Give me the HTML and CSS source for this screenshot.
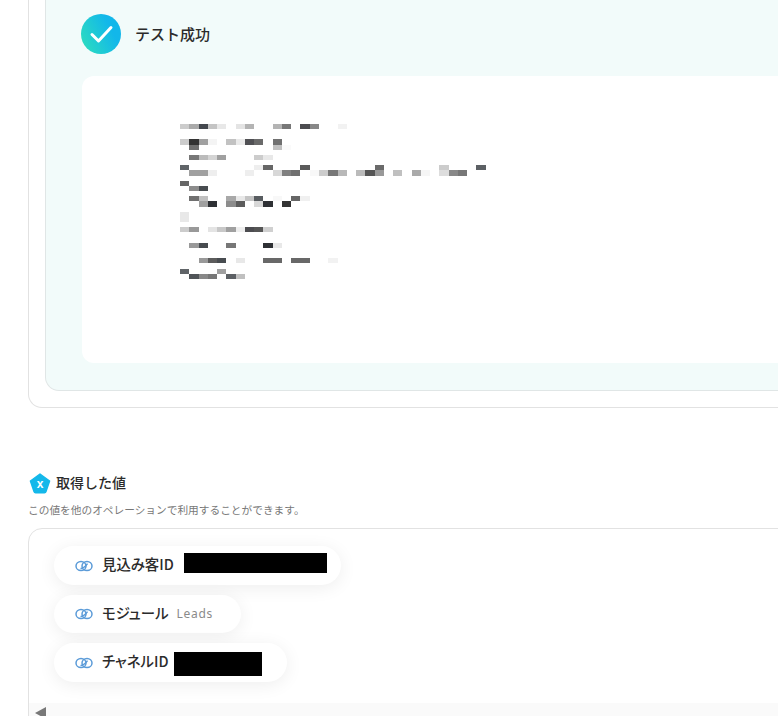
FILE: index.html
```html
<!DOCTYPE html>
<html lang="ja">
<head>
    <meta charset="UTF-8">
    <meta name="viewport" content="width=device-width, initial-scale=1.0">
    <link rel="stylesheet" href="styles.css">
    <title>テスト成功</title>
</head>
<body>
    <div class="page">
        <div class="card">
            <div class="result-panel">
                <div class="result-head">
                    <svg class="check-icon" width="40" height="40" viewBox="0 0 40 40">
                        <defs>
                            <linearGradient id="checkGrad" x1="0" y1="0.75" x2="1" y2="0.25">
                                <stop offset="0" stop-color="#2cdcc0"/>
                                <stop offset="0.75" stop-color="#12b7ea"/>
                            </linearGradient>
                        </defs>
                        <circle cx="20" cy="20" r="20" fill="url(#checkGrad)"/>
                        <path d="M11 20.5 L17.5 27 L30 13.5" fill="none" stroke="#fff" stroke-width="3" stroke-linecap="round" stroke-linejoin="round"/>
                    </svg>
                    <span class="result-title">テスト成功</span>
                </div>
                <div class="result-body">
                    <!-- blurred response, drawn as a mosaic -->
                    <svg class="mosaic" width="315" height="160" viewBox="0 0 34 31" preserveAspectRatio="none" shape-rendering="crispEdges">
                        <g>
                            <rect x="0" y="0" width="1" height="1" fill="#ccc"/><rect x="1" y="0" width="1" height="1" fill="#aaa"/><rect x="2" y="0" width="1" height="1" fill="#44484e"/><rect x="3" y="0" width="1" height="1" fill="#c4c4c4"/><rect x="4" y="0" width="1" height="1" fill="#e8e8e8"/><rect x="6" y="0" width="1" height="1" fill="#e4e4e4"/><rect x="7" y="0" width="1" height="1" fill="#b4b4b4"/><rect x="10" y="0" width="1" height="1" fill="#b4b4b4"/><rect x="11" y="0" width="1" height="1" fill="#777"/><rect x="13" y="0" width="1" height="1" fill="#4c4c50"/><rect x="14" y="0" width="1" height="1" fill="#888"/><rect x="17" y="0" width="1" height="1" fill="#f2f2f2"/>
                            <rect x="0" y="3" width="1" height="1" fill="#ccc"/><rect x="1" y="3" width="1" height="1" fill="#333"/><rect x="2" y="3" width="1" height="1" fill="#a0a0a0"/><rect x="3" y="3" width="1" height="1" fill="#f4f4f4"/><rect x="5" y="3" width="1" height="1" fill="#c2c2c2"/><rect x="6" y="3" width="1" height="1" fill="#eaeaea"/><rect x="7" y="3" width="1" height="1" fill="#505054"/><rect x="8" y="3" width="1" height="1" fill="#6a6a6a"/><rect x="10" y="3" width="1" height="1" fill="#707070"/>
                            <rect x="1" y="4" width="1" height="1" fill="#707070"/><rect x="10" y="4" width="1" height="1" fill="#c0c0c0"/><rect x="11" y="4" width="1" height="1" fill="#fafafa"/>
                            <rect x="1" y="6" width="1" height="1" fill="#777"/><rect x="2" y="6" width="1" height="1" fill="#bbb"/><rect x="3" y="6" width="1" height="1" fill="#d4d4d4"/><rect x="4" y="6" width="1" height="1" fill="#a0a0a0"/><rect x="8" y="6" width="1" height="1" fill="#ccc"/><rect x="9" y="6" width="1" height="1" fill="#e8e8e8"/>
                            <rect x="0" y="8" width="1" height="1" fill="#606468"/><rect x="8" y="8" width="1" height="1" fill="#eee"/><rect x="9" y="8" width="1" height="1" fill="#666"/><rect x="13" y="8" width="1" height="1" fill="#5a5a5a"/><rect x="21" y="8" width="1" height="1" fill="#6a6a6a"/><rect x="28" y="8" width="1" height="1" fill="#ccc"/><rect x="32" y="8" width="1" height="1" fill="#5c6064"/>
                            <rect x="1" y="9" width="2" height="1" fill="#a0a0a0"/><rect x="3" y="9" width="1" height="1" fill="#eee"/><rect x="7" y="9" width="1" height="1" fill="#eee"/><rect x="10" y="9" width="1" height="1" fill="#d8d8d8"/><rect x="11" y="9" width="1" height="1" fill="#808080"/><rect x="12" y="9" width="1" height="1" fill="#707070"/><rect x="14" y="9" width="1" height="1" fill="#f8f8f8"/><rect x="15" y="9" width="1" height="1" fill="#ccc"/><rect x="16" y="9" width="1" height="1" fill="#777"/><rect x="17" y="9" width="1" height="1" fill="#b8b8b8"/><rect x="19" y="9" width="1" height="1" fill="#bbb"/><rect x="20" y="9" width="1" height="1" fill="#555"/><rect x="21" y="9" width="1" height="1" fill="#999"/><rect x="23" y="9" width="1" height="1" fill="#c0c0c0"/><rect x="25" y="9" width="1" height="1" fill="#aaa"/><rect x="26" y="9" width="1" height="1" fill="#f6f6f6"/><rect x="28" y="9" width="1" height="1" fill="#ddd"/><rect x="29" y="9" width="1" height="1" fill="#888"/><rect x="30" y="9" width="1" height="1" fill="#777"/>
                            <rect x="0" y="11" width="1" height="1" fill="#666"/>
                            <rect x="1" y="12" width="1" height="1" fill="#8c8c8c"/><rect x="2" y="12" width="1" height="1" fill="#484c50"/>
                            <rect x="1" y="14" width="1" height="1" fill="#707070"/><rect x="2" y="14" width="1" height="1" fill="#c0c0c0"/><rect x="5" y="14" width="1" height="1" fill="#a8a8a8"/><rect x="6" y="14" width="1" height="1" fill="#e8e8e8"/><rect x="7" y="14" width="1" height="1" fill="#c4c4c4"/><rect x="8" y="14" width="1" height="1" fill="#585c60"/><rect x="10" y="14" width="1" height="1" fill="#f8f8f8"/><rect x="12" y="14" width="1" height="1" fill="#666"/><rect x="13" y="14" width="1" height="1" fill="#f0f0f0"/>
                            <rect x="2" y="15" width="1" height="1" fill="#a0a0a0"/><rect x="3" y="15" width="1" height="1" fill="#2e3034"/><rect x="5" y="15" width="1" height="1" fill="#8c8c8c"/><rect x="6" y="15" width="1" height="1" fill="#5c5c5c"/><rect x="8" y="15" width="1" height="1" fill="#d8d8d8"/><rect x="9" y="15" width="1" height="1" fill="#2e3034"/><rect x="11" y="15" width="1" height="1" fill="#333"/>
                            <rect x="0" y="17" width="1" height="2" fill="#e8e8e8"/>
                            <rect x="0" y="20" width="1" height="1" fill="#ccc"/><rect x="1" y="20" width="1" height="1" fill="#999"/><rect x="3" y="20" width="1" height="1" fill="#e4e4e4"/><rect x="4" y="20" width="1" height="1" fill="#c8c8c8"/><rect x="5" y="20" width="1" height="1" fill="#a0a0a0"/><rect x="6" y="20" width="1" height="1" fill="#eee"/><rect x="7" y="20" width="1" height="1" fill="#4c4c50"/><rect x="8" y="20" width="1" height="1" fill="#555"/><rect x="9" y="20" width="1" height="1" fill="#d0d0d0"/>
                            <rect x="1" y="23" width="1" height="1" fill="#999"/><rect x="2" y="23" width="1" height="1" fill="#484c50"/><rect x="5" y="23" width="1" height="1" fill="#777"/><rect x="9" y="23" width="1" height="1" fill="#2e3034"/><rect x="10" y="23" width="1" height="1" fill="#e8e8e8"/>
                            <rect x="2" y="26" width="1" height="1" fill="#999"/><rect x="3" y="26" width="1" height="1" fill="#5c5c5c"/><rect x="4" y="26" width="1" height="1" fill="#484c50"/><rect x="6" y="26" width="1" height="1" fill="#e8e8e8"/><rect x="9" y="26" width="2" height="1" fill="#686868"/><rect x="12" y="26" width="2" height="1" fill="#686868"/><rect x="16" y="26" width="1" height="1" fill="#f2f2f2"/>
                            <rect x="0" y="28" width="1" height="1" fill="#606468"/><rect x="4" y="28" width="1" height="1" fill="#a0a0a0"/>
                            <rect x="1" y="29" width="1" height="1" fill="#505458"/><rect x="2" y="29" width="1" height="1" fill="#888"/><rect x="3" y="29" width="1" height="1" fill="#777"/><rect x="5" y="29" width="1" height="1" fill="#5c6064"/><rect x="6" y="29" width="1" height="1" fill="#c0c0c0"/>
                        </g>
                    </svg>
                </div>
            </div>
        </div>

        <div class="values-head">
            <svg class="pentagon" width="22" height="21" viewBox="0 0 22 21">
                <path d="M11 1 L20.6 8 L17 18.6 Q16.7 19.8 15.4 19.8 L6.6 19.8 Q5.3 19.8 5 18.6 L1.4 8 Z" fill="#14b8ea" stroke="#14b8ea" stroke-width="1.4" stroke-linejoin="round"/>
                <text x="11" y="14.5" class="pentagon-x">x</text>
            </svg>
            <h2>取得した値</h2>
        </div>
        <p class="values-note">この値を他のオペレーションで利用することができます。</p>

        <div class="values-box">
            <div class="pill pill-id">
                <svg class="link-icon" width="18" height="12" viewBox="0 0 18 12"><ellipse cx="6" cy="6" rx="5" ry="4.6"/><ellipse cx="12" cy="6" rx="5" ry="4.6"/><path d="M5.5 8.4 Q9 8.6 12.5 3.6"/></svg>
                <span class="pill-label">見込み客ID</span>
                <span class="redact redact-long"></span>
            </div>
            <div class="pill pill-short">
                <svg class="link-icon" width="18" height="12" viewBox="0 0 18 12"><ellipse cx="6" cy="6" rx="5" ry="4.6"/><ellipse cx="12" cy="6" rx="5" ry="4.6"/><path d="M5.5 8.4 Q9 8.6 12.5 3.6"/></svg>
                <span class="pill-label">モジュール</span>
                <span class="pill-value">Leads</span>
            </div>
            <div class="pill pill-channel">
                <svg class="link-icon" width="18" height="12" viewBox="0 0 18 12"><ellipse cx="6" cy="6" rx="5" ry="4.6"/><ellipse cx="12" cy="6" rx="5" ry="4.6"/><path d="M5.5 8.4 Q9 8.6 12.5 3.6"/></svg>
                <span class="pill-label">チャネルID</span>
                <span class="redact redact-mid"></span>
            </div>
            <div class="scrollbar"><span class="scroll-arrow"></span></div>
        </div>
    </div>
</body>
</html>
```

FILE: styles.css
```css
html, body {
    margin: 0;
    padding: 0;
    background-color: #fff;
    overflow: hidden;
}

body {
    font-family: "Noto Sans CJK JP", "Noto Sans", sans-serif;
    color: #2b2b2b;
}

.page {
    width: 778px;
    height: 716px;
    overflow: hidden;
    padding-left: 28px;
    box-sizing: border-box;
}

.card {
    width: 900px;
    height: 408px;
    box-sizing: border-box;
    padding: 0 16px 16px;
    border: 1px solid #e2e2e2;
    border-top: none;
    border-radius: 0 0 14px 14px;
}

.result-panel {
    height: 391px;
    box-sizing: border-box;
    padding: 14px 0 0 35px;
    background-color: #f2fbfa;
    border: 1px solid #e0e6e6;
    border-top: none;
    border-radius: 0 0 14px 14px;
}

.result-head {
    display: flex;
    align-items: center;
    gap: 14px;
    height: 40px;
}

.result-title {
    font-size: 15px;
    font-weight: 500;
    line-height: 20px;
}

.result-body {
    margin: 22px 0 0 1px;
    height: 287px;
    box-sizing: border-box;
    padding: 48px 0 0 98px;
    background-color: #fff;
    border-radius: 12px;
}

.mosaic {
    display: block;
}

.values-head {
    display: flex;
    align-items: center;
    gap: 5px;
    margin-top: 65px;
    height: 21px;
    padding-left: 1px;
}

.values-head h2 {
    margin: -2px 0 0;
    font-size: 14px;
    font-weight: 500;
    line-height: 21px;
}

.pentagon-x {
    font-family: "Liberation Sans", sans-serif;
    font-size: 12px;
    font-weight: 700;
    fill: #fff;
    text-anchor: middle;
}

.values-note {
    margin: 8px 0 0;
    font-size: 10.7px;
    line-height: 16px;
    color: #777;
}

.values-box {
    position: relative;
    width: 900px;
    height: 200px;
    margin-top: 10px;
    box-sizing: border-box;
    padding: 17px 0 0 25px;
    border: 1px solid #e2e2e2;
    border-radius: 14px 14px 0 0;
    display: flex;
    flex-direction: column;
    align-items: flex-start;
    gap: 10px;
}

.pill {
    display: flex;
    align-items: center;
    height: 39px;
    box-sizing: border-box;
    padding-left: 21px;
    background-color: #fff;
    border-radius: 20px;
    box-shadow: 0 3px 18px rgba(0, 0, 0, 0.07);
}

.pill-id {
    width: 287px;
}

.pill-short {
    width: 187px;
    height: 38px;
}

.pill-channel {
    width: 233px;
}

.link-icon {
    flex: none;
    margin-right: 9px;
    fill: none;
    stroke: #5b9bd8;
    stroke-width: 1.5;
}

.pill-label {
    font-size: 14.4px;
    font-weight: 500;
    font-feature-settings: "palt";
    line-height: 20px;
    margin-top: -3px;
    color: #2b2b2b;
}

.pill-value {
    margin-left: 8px;
    margin-top: -1px;
    font-family: "Noto Sans", sans-serif;
    font-size: 12px;
    letter-spacing: 0.7px;
    color: #8a8a8a;
}

.redact {
    display: block;
    flex: none;
    background-color: #000;
}

.redact-long {
    width: 143px;
    height: 20px;
    margin-left: 10px;
    margin-bottom: 5px;
}

.redact-mid {
    width: 88px;
    height: 24px;
    margin-left: 5px;
    margin-top: 3px;
}

.scrollbar {
    position: absolute;
    left: 0;
    right: 0;
    top: 174px;
    height: 30px;
    background-color: #fafafa;
}

.scroll-arrow {
    position: absolute;
    left: 6px;
    top: 4px;
    width: 0;
    height: 0;
    border-top: 6px solid transparent;
    border-bottom: 6px solid transparent;
    border-right: 11px solid #787878;
}
```
